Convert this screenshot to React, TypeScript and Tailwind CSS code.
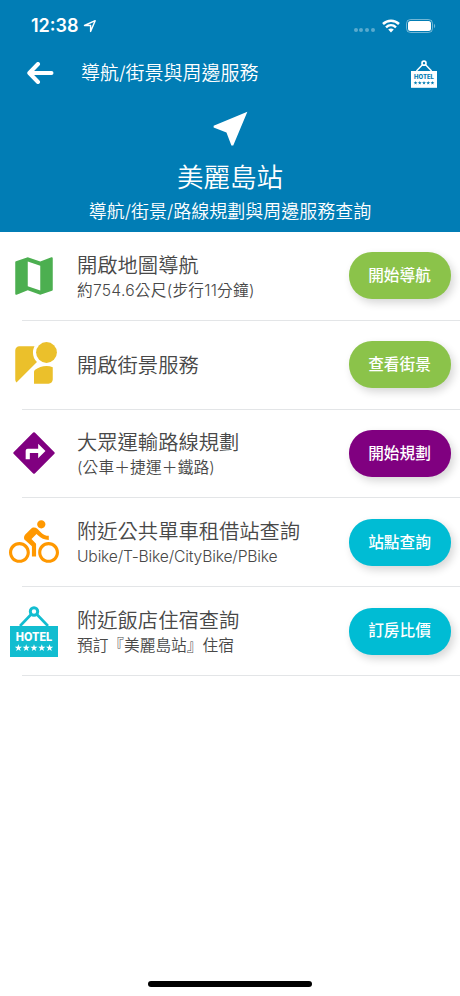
import type { ReactNode } from "react";
import { MdDirectionsBike, MdMap, MdNearMe, MdStreetview } from "react-icons/md";

interface Service {
  icon: ReactNode;
  title: string;
  subtitle?: string;
  subtitleStyle?: string;
  action: string;
  color: string;
}

interface HotelSignProps {
  className: string;
  cutout: string;
}

const STAR = "M0-3.8.9-1.200 3.600-1.200 1.400.5 2.200 3.100 0 1.500-2.200 3.100-1.400.5-3.600-1.200-.9-1.200Z";

const HotelSign = ({ className, cutout }: HotelSignProps) => (
  <svg viewBox="0 0 48 51" className={className} fill="none">
    <path d="M10 20 21.500 8M38 20 26.500 8" stroke="currentColor" strokeWidth="2.600" />
    <circle cx="24" cy="5.500" r="3.700" stroke="currentColor" strokeWidth="3" />
    <path d="M0 20h48v31H0z" fill="currentColor" />
    <text
      x="24"
      y="34.600"
      textAnchor="middle"
      textLength="36.500"
      lengthAdjust="spacingAndGlyphs"
      className={`font-["Inter"] text-[11.200px] font-extrabold ${cutout}`}
    >
      HOTEL
    </text>
    {[8.4, 16.2, 24, 31.8, 39.6].map((x) => (
      <path key={x} d={STAR} transform={`translate(${x} 42)`} className={cutout} />
    ))}
  </svg>
);

const TurnSign = () => (
  <svg viewBox="0 0 24 24" className="size-[50px] text-[#800080]" fill="currentColor">
    <path
      fillRule="evenodd"
      d="M12.400 2.200 21.800 11.600q.4.400 0 .8L12.400 21.800q-.4.400-.8 0L2.200 12.400q-.4-.4 0-.8L11.600 2.200q.4-.4.8 0ZM14 14.500l3.500-3.500L14 7.500V10H9c-.55 0-1 .45-1 1v4h2v-3h4Z"
    />
  </svg>
);

const services: Service[] = [
  {
    icon: <MdMap className="size-[50px] text-[#4caf50]" />,
    title: "開啟地圖導航",
    subtitle: "約754.6公尺(步行11分鐘)",
    subtitleStyle: "tracking-[0.240px]",
    action: "開始導航",
    color: "bg-[#8bc34a]",
  },
  {
    icon: <MdStreetview className="size-[50px] text-[#ebc02b]" />,
    title: "開啟街景服務",
    action: "查看街景",
    color: "bg-[#8bc34a]",
  },
  {
    icon: <TurnSign />,
    title: "大眾運輸路線規劃",
    subtitle: "(公車＋捷運＋鐵路)",
    subtitleStyle: "tracking-[0.150px]",
    action: "開始規劃",
    color: "bg-[#800080]",
  },
  {
    icon: <MdDirectionsBike className="size-[50px] text-[#ff9800]" />,
    title: "附近公共單車租借站查詢",
    subtitle: "Ubike/T-Bike/CityBike/PBike",
    subtitleStyle: "tracking-[-0.180px]",
    action: "站點查詢",
    color: "bg-[#00bcd4]",
  },
  {
    icon: <HotelSign className="h-[51px] w-12 text-[#12bdd0]" cutout="fill-white" />,
    title: "附近飯店住宿查詢",
    subtitle: "預訂『美麗島站』住宿",
    action: "訂房比價",
    color: "bg-[#00bcd4]",
  },
];

const StatusBar = () => (
  <div className="flex h-[50px] items-center pl-[31px] pr-[24px] pt-px">
    <span className="text-[18px] font-semibold leading-none">12:38</span>
    <svg viewBox="0 0 14 14" className="ml-1 size-[14px]" fill="none">
      <path d="M1.500 6.500 12.200 1.700 7.600 12.400V6.500Z" stroke="currentColor" strokeWidth="1.400" strokeLinejoin="round" />
    </svg>
    <div className="ml-auto mt-[9px] flex gap-[1.800px]">
      {[0, 1, 2, 3].map((dot) => (
        <span key={dot} className="size-[4px] rounded-full bg-white/35" />
      ))}
    </div>
    <svg viewBox="0 0 18 14" className="ml-[7px] h-[14px] w-[18px]" fill="none">
      <path d="M1 5C5.500.600 12.500.600 17 5" stroke="currentColor" strokeWidth="2.500" />
      <path d="M4 8.300c2.900-2.700 7.100-2.700 10 0" stroke="currentColor" strokeWidth="2.400" />
      <path d="M6.200 10.600c1.700-1.400 3.900-1.400 5.600 0L9 13.500Z" fill="currentColor" />
    </svg>
    <svg viewBox="0 0 30 14" className="ml-[6px] h-[14px] w-[30px]" fill="none">
      <rect x=".5" y=".5" width="26" height="13" rx="4" stroke="currentColor" strokeOpacity=".45" />
      <rect x="2" y="2" width="23" height="10" rx="2.500" fill="currentColor" />
      <path d="M28 4.800c1.600.7 1.600 3.700 0 4.400Z" fill="currentColor" fillOpacity=".45" />
    </svg>
  </div>
);

const ServiceRow = ({ icon, title, subtitle, subtitleStyle = "", action, color }: Service) => (
  <li className="flex h-[88.800px] flex-col">
    <div className="flex flex-1 items-center pr-[9px]">
      <div className="flex w-[68px] shrink-0 justify-center">{icon}</div>
      <div className="ml-[9px] flex-1 whitespace-nowrap pt-[2px] font-[350] text-[#484848]">
        <h2 className="text-[20.300px] leading-[28px]">{title}</h2>
        {subtitle && <p className={`text-[15.700px] leading-[22px] ${subtitleStyle}`}>{subtitle}</p>}
      </div>
      <button
        className={`h-[47px] w-[102px] rounded-[23px] pr-px text-[15.700px] font-medium text-white shadow-[3px_4px_8px_rgba(0,0,0,0.16)] ${color}`}
      >
        {action}
      </button>
    </div>
    <div className="ml-[22px] h-px bg-[#e3e5e7]" />
  </li>
);

const App = () => {
  return (
    <div className='flex h-[996px] w-[460px] flex-col overflow-hidden bg-white font-["Inter","Noto_Sans_CJK_TC",sans-serif]'>
      <header className="h-[231.500px] shrink-0 bg-[#017db5] text-white">
        <StatusBar />
        <div className="flex h-[46px] items-center pl-[27px] pr-[23px]">
          <svg viewBox="0 0 27 22" className="-mt-px h-[22px] w-[27px]" fill="none">
            <path d="M11 2 2.300 11l8.700 9M3 11h21.500" stroke="currentColor" strokeWidth="4" strokeLinecap="round" strokeLinejoin="round" />
          </svg>
          <h1 className="ml-[27px] pt-[3px] text-[19px] font-[350]">導航/街景與周邊服務</h1>
          <HotelSign className="ml-auto mt-[2px] h-[28px] w-[26px]" cutout="fill-[#017db5]" />
        </div>
        <div className="flex flex-col items-center pt-[10px]">
          <MdNearMe className="size-[45px]" />
          <p className="mt-[7px] text-[26.500px] font-[350] leading-[38px]">美麗島站</p>
          <p className="mt-[3px] text-[18px] font-[350] leading-[26px]">導航/街景/路線規劃與周邊服務查詢</p>
        </div>
      </header>
      <ul className="pt-[0.500px]">
        {services.map((service) => (
          <ServiceRow key={service.title} {...service} />
        ))}
      </ul>
      <div className="mx-auto mb-[9px] mt-auto h-[6px] w-[164px] rounded-full bg-black" />
    </div>
  );
};

export default App;
